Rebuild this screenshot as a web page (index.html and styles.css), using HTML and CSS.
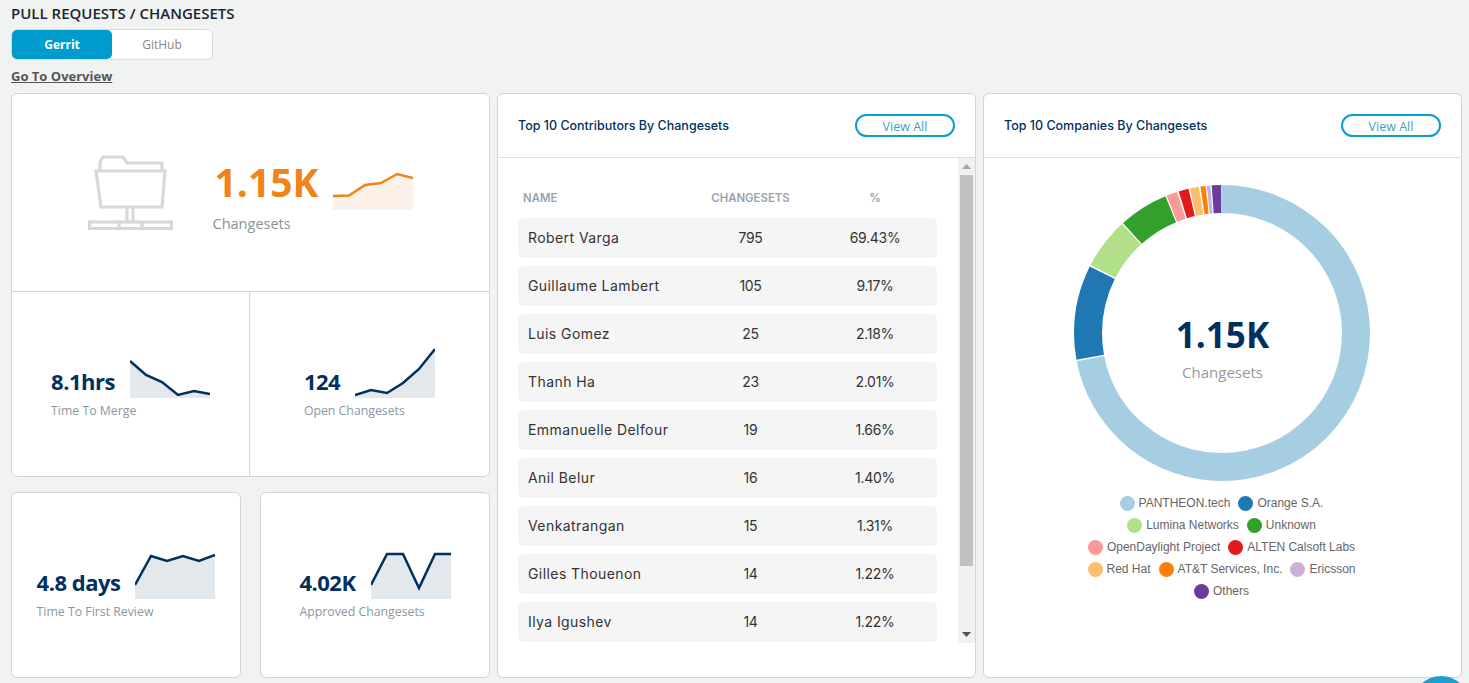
FILE: index.html
```html
<!DOCTYPE html>
<html lang="en">
<head>
<meta charset="utf-8">
<title>Pull Requests / Changesets</title>
<link rel="stylesheet" href="styles.css">
</head>
<body>
<main class="page">
  <h1 class="page-title">PULL REQUESTS / CHANGESETS</h1>
  <div class="tabs">
    <button class="tab tab-active">Gerrit</button>
    <button class="tab">GitHub</button>
  </div>
  <a class="overview-link" href="#">Go To Overview</a>
  <div class="columns">
    <section class="left-col">
      <div class="card summary-card">
        <div class="summary-main">
          <div class="summary-group">
            <svg class="folder-icon" width="85" height="75" viewBox="0 0 85 75" fill="none" stroke="#d8d8d8" stroke-width="3.200">
              <path d="M12 15V7L15 2H35L39 8H74V15"/>
              <path d="M8 16H77L74 52H13Z"/>
              <path d="M39 52V66M45 52V66"/>
              <rect x="1.5" y="67" width="82" height="6.5"/>
              <path d="M31 67V73M54 67V73"/>
            </svg>
            <div class="summary-text">
              <div class="summary-top">
                <span class="summary-value">1.15K</span>
                <svg class="spark spark-low" width="80" height="40" viewBox="0 0 80 40">
                  <path class="area-orange" d="M0 26L16 25.500L32 15L48 13L64 4L80 8V40H0Z"/>
                  <path class="line-orange" d="M0 26L16 25.500L32 15L48 13L64 4L80 8"/>
                </svg>
              </div>
              <div class="summary-label">Changesets</div>
            </div>
          </div>
        </div>
        <div class="summary-split">
          <div class="stat stat-split">
            <div class="stat-inner">
              <div class="stat-top">
                <span class="stat-value">8.1hrs</span>
                <svg class="spark" width="80" height="51" viewBox="0 0 80 51">
                  <path class="area-navy" d="M0 14L16 28L32 35L48 48L64 44L80 47V51H0Z"/>
                  <path class="line-navy" d="M0 14L16 28L32 35L48 48L64 44L80 47"/>
                </svg>
              </div>
              <div class="stat-label">Time To Merge</div>
            </div>
          </div>
          <div class="stat">
            <div class="stat-inner">
              <div class="stat-top">
                <span class="stat-value">124</span>
                <svg class="spark" width="80" height="51" viewBox="0 0 80 51">
                  <path class="area-navy" d="M0 48L16 43L32 46L48 36L64 22L80 2V51H0Z"/>
                  <path class="line-navy" d="M0 48L16 43L32 46L48 36L64 22L80 2"/>
                </svg>
              </div>
              <div class="stat-label">Open Changesets</div>
            </div>
          </div>
        </div>
      </div>
      <div class="mini-row">
        <div class="card stat">
          <div class="stat-inner">
            <div class="stat-top">
              <span class="stat-value">4.8 days</span>
              <svg class="spark" width="80" height="51" viewBox="0 0 80 51">
                <path class="area-navy" d="M0 37L16 8L32 13L48 8L64 13L80 7V51H0Z"/>
                <path class="line-navy" d="M0 37L16 8L32 13L48 8L64 13L80 7"/>
              </svg>
            </div>
            <div class="stat-label">Time To First Review</div>
          </div>
        </div>
        <div class="card stat">
          <div class="stat-inner">
            <div class="stat-top">
              <span class="stat-value">4.02K</span>
              <svg class="spark" width="80" height="51" viewBox="0 0 80 51">
                <path class="area-navy" d="M0 37L16 6L32 6L48 40L64 6L80 6V51H0Z"/>
                <path class="line-navy" d="M0 37L16 6L32 6L48 40L64 6L80 6"/>
              </svg>
            </div>
            <div class="stat-label">Approved Changesets</div>
          </div>
        </div>
      </div>
    </section>

    <section class="card panel">
      <header class="panel-head">
        <h2 class="panel-title">Top 10 Contributors By Changesets</h2>
        <button class="view-all">View All</button>
      </header>
      <div class="table-wrap">
        <div class="table-scroll">
          <div class="table-head">
            <span class="col-name">NAME</span>
            <span class="col-num">CHANGESETS</span>
            <span class="col-pct">%</span>
          </div>
          <div class="row"><span class="col-name">Robert Varga</span><span class="col-num">795</span><span class="col-pct">69.43%</span></div>
          <div class="row"><span class="col-name">Guillaume Lambert</span><span class="col-num">105</span><span class="col-pct">9.17%</span></div>
          <div class="row"><span class="col-name">Luis Gomez</span><span class="col-num">25</span><span class="col-pct">2.18%</span></div>
          <div class="row"><span class="col-name">Thanh Ha</span><span class="col-num">23</span><span class="col-pct">2.01%</span></div>
          <div class="row"><span class="col-name">Emmanuelle Delfour</span><span class="col-num">19</span><span class="col-pct">1.66%</span></div>
          <div class="row"><span class="col-name">Anil Belur</span><span class="col-num">16</span><span class="col-pct">1.40%</span></div>
          <div class="row"><span class="col-name">Venkatrangan</span><span class="col-num">15</span><span class="col-pct">1.31%</span></div>
          <div class="row"><span class="col-name">Gilles Thouenon</span><span class="col-num">14</span><span class="col-pct">1.22%</span></div>
          <div class="row"><span class="col-name">Ilya Igushev</span><span class="col-num">14</span><span class="col-pct">1.22%</span></div>
        </div>
        <div class="scrollbar">
          <svg class="sb-arrow" width="17" height="17" viewBox="0 0 17 17"><path d="M8.500 6L13 11H4Z" fill="#a3a3a3"/></svg>
          <div class="sb-thumb"></div>
          <svg class="sb-arrow sb-arrow-end" width="17" height="17" viewBox="0 0 17 17"><path d="M4 6H13L8.500 11Z" fill="#505050"/></svg>
        </div>
      </div>
    </section>

    <section class="card panel">
      <header class="panel-head">
        <h2 class="panel-title">Top 10 Companies By Changesets</h2>
        <button class="view-all">View All</button>
      </header>
      <div class="chart-body">
        <div class="donut">
          <svg width="296" height="296" viewBox="0 0 296 296" fill="none" stroke-width="28">
            <g transform="rotate(-90 148 148)">
              <circle cx="148" cy="148" r="134" pathLength="360" stroke="#a6cee3" stroke-dasharray="259 101" stroke-dashoffset="0"/>
              <circle cx="148" cy="148" r="134" pathLength="360" stroke="#1f78b4" stroke-dasharray="37.100 322.900" stroke-dashoffset="-259.600"/>
              <circle cx="148" cy="148" r="134" pathLength="360" stroke="#b2df8a" stroke-dasharray="20.100 339.900" stroke-dashoffset="-297.400"/>
              <circle cx="148" cy="148" r="134" pathLength="360" stroke="#33a02c" stroke-dasharray="19.500 340.500" stroke-dashoffset="-318"/>
              <circle cx="148" cy="148" r="134" pathLength="360" stroke="#fb9a99" stroke-dasharray="4.300 355.700" stroke-dashoffset="-338"/>
              <circle cx="148" cy="148" r="134" pathLength="360" stroke="#e31a1c" stroke-dasharray="3.900 356.100" stroke-dashoffset="-343"/>
              <circle cx="148" cy="148" r="134" pathLength="360" stroke="#fdbf6f" stroke-dasharray="3.500 356.500" stroke-dashoffset="-347.500"/>
              <circle cx="148" cy="148" r="134" pathLength="360" stroke="#ff7f00" stroke-dasharray="2 358" stroke-dashoffset="-351.600"/>
              <circle cx="148" cy="148" r="134" pathLength="360" stroke="#cab2d6" stroke-dasharray="1.400 358.600" stroke-dashoffset="-354.100"/>
              <circle cx="148" cy="148" r="134" pathLength="360" stroke="#6a3d9a" stroke-dasharray="3.700 356.300" stroke-dashoffset="-356"/>
            </g>
          </svg>
          <div class="donut-center">
            <div class="donut-value">1.15K</div>
            <div class="donut-label">Changesets</div>
          </div>
        </div>
        <div class="legend">
          <div class="legend-row">
            <span class="legend-item"><i class="dot dot-1"></i>PANTHEON.tech</span>
            <span class="legend-item"><i class="dot dot-2"></i>Orange S.A.</span>
          </div>
          <div class="legend-row">
            <span class="legend-item"><i class="dot dot-3"></i>Lumina Networks</span>
            <span class="legend-item"><i class="dot dot-4"></i>Unknown</span>
          </div>
          <div class="legend-row">
            <span class="legend-item"><i class="dot dot-5"></i>OpenDaylight Project</span>
            <span class="legend-item"><i class="dot dot-6"></i>ALTEN Calsoft Labs</span>
          </div>
          <div class="legend-row">
            <span class="legend-item"><i class="dot dot-7"></i>Red Hat</span>
            <span class="legend-item"><i class="dot dot-8"></i>AT&amp;T Services, Inc.</span>
            <span class="legend-item"><i class="dot dot-9"></i>Ericsson</span>
          </div>
          <div class="legend-row">
            <span class="legend-item"><i class="dot dot-10"></i>Others</span>
          </div>
        </div>
      </div>
    </section>
  </div>
</main>
<div class="chat-bubble"></div>
</body>
</html>
```
FILE: styles.css
```css
* { box-sizing: border-box; }
html, body { margin: 0; height: 683px; overflow: hidden; }
body { background: #f1f3f3; font-family: "Open Sans", sans-serif; color: #333; }
.page { padding: 5px 7px 0 11px; }
.page-title { margin: 0; font-size: 15px; line-height: 17px; font-weight: 600; color: #1c2530; }
.tabs { display: flex; width: 202px; height: 31px; margin-top: 7px; padding: 0; background: #fff; border: 1px solid #dcdcdc; border-radius: 6px; }
.tab { flex: 1; border: 0; background: transparent; border-radius: 5px; font: 400 12px "Open Sans", sans-serif; color: #888; padding: 0; }
.tab-active { background: #009bcd; color: #fff; font-weight: 700; }
.overview-link { display: block; margin-top: 8px; height: 17px; font-size: 13px; line-height: 17px; font-weight: 700; color: #555; text-decoration: underline; }
.columns { display: grid; grid-template-columns: 479px 479px 479px; gap: 7px; margin-top: 8px; height: 585px; }
.card { background: #fff; border: 1px solid #d2d5d5; border-radius: 6px; }
.left-col { display: flex; flex-direction: column; gap: 15px; }
.summary-card { height: 384px; display: flex; flex-direction: column; }
.summary-main { height: 198px; display: flex; align-items: center; justify-content: center; border-bottom: 1px solid #d2d5d5; }
.summary-group { display: flex; align-items: center; gap: 40px; }
.summary-text { margin-top: 6px; }
.summary-top { display: flex; align-items: flex-end; gap: 15px; }
.summary-value { font-size: 39px; line-height: 50px; font-weight: 700; color: #f0841a; margin-left: 2px; }
.summary-label { margin-top: 7px; font-size: 14.500px; line-height: 20px; font-weight: 500; color: #8a9299; }
.summary-split { flex: 1; display: grid; grid-template-columns: 238px 1fr; }
.stat { display: flex; align-items: center; justify-content: center; padding-bottom: 2px; }
.stat-split { border-right: 1px solid #d2d5d5; }
.stat-top { display: flex; align-items: flex-end; gap: 15px; }
.stat-value { font-size: 22px; line-height: 30px; font-weight: 700; color: #00305f; letter-spacing: -.5px; margin-bottom: 2px; }
.stat-label { font-size: 12.300px; line-height: 17px; color: #8a97a3; margin-top: 4px; white-space: nowrap; }
.spark { display: block; flex: none; }
.spark-low { margin-bottom: -3px; }
.area-orange { fill: #fcf1e8; }
.line-orange { fill: none; stroke: #f0841a; stroke-width: 2.5; }
.area-navy { fill: #e3e8ed; }
.line-navy { fill: none; stroke: #00305f; stroke-width: 2.500; }
.mini-row { flex: 1; display: grid; grid-template-columns: 230px 230px; justify-content: space-between; }
.panel { display: flex; flex-direction: column; min-height: 0; }
.panel-head { height: 64px; flex: none; display: flex; align-items: center; justify-content: space-between; padding: 0 20px; border-bottom: 1px solid #dcdfdf; }
.panel-title { margin: 0; font: 500 12.500px "Inter", sans-serif; color: #00305f; }
.view-all { width: 100px; height: 23px; padding: 1px 0 0; border: 2px solid #0a9dcf; border-radius: 12px; background: #fff; font: 400 12.500px "Open Sans", sans-serif; color: #3aa0d0; }
.table-wrap { display: flex; height: 485px; }
.table-scroll { flex: 1; min-width: 0; overflow: hidden; padding: 0 21px 0 20px; }
.scrollbar { flex: none; width: 17px; display: flex; flex-direction: column; background: #f1f1f1; }
.sb-arrow { display: block; flex: none; }
.sb-arrow-end { margin-top: auto; }
.sb-thumb { height: 391px; margin: 0 2px; background: #c1c1c1; }
.table-head, .row { display: grid; width: 419px; align-items: center; }
.table-head { height: 60px; padding: 20px 0 0 5px; grid-template-columns: 165px 125px 124px; font: 600 11.400px "Inter", sans-serif; color: #98a2b3; }
.row { height: 40px; margin-bottom: 8px; padding: 0 0 1px 10px; grid-template-columns: 160px 125px 124px; background: #f5f5f5; border-radius: 5px; font: 400 14px "Inter", sans-serif; color: #333; }
.row .col-name { letter-spacing: .42px; }
.row .col-num, .row .col-pct { letter-spacing: -.3px; }
.col-num, .col-pct { text-align: center; }
.col-name { white-space: nowrap; }
.chart-body { flex: 1; display: flex; flex-direction: column; align-items: center; padding: 27px 2px 0 0; }
.donut { position: relative; width: 296px; height: 296px; }
.donut svg { display: block; }
.donut-center { position: absolute; inset: 0; display: flex; flex-direction: column; align-items: center; justify-content: center; padding: 30px 0 0 2px; }
.donut-value { font-size: 35px; line-height: 44px; font-weight: 700; color: #00305f; }
.donut-label { font-size: 15px; line-height: 24px; color: #999; margin-top: 3px; }
.legend { margin-top: 11px; font: 12px/22px "Liberation Sans", sans-serif; color: #666; display: flex; flex-direction: column; align-items: center; }
.legend-row { display: flex; gap: 8px; height: 22px; }
.legend-item { display: flex; align-items: center; gap: 4px; white-space: nowrap; }
.dot { width: 15px; height: 15px; border-radius: 50%; flex: none; }
.dot-1 { background: #a6cee3; }
.dot-2 { background: #1f78b4; }
.dot-3 { background: #b2df8a; }
.dot-4 { background: #33a02c; }
.dot-5 { background: #fb9a99; }
.dot-6 { background: #e31a1c; }
.dot-7 { background: #fdbf6f; }
.dot-8 { background: #ff7f00; }
.dot-9 { background: #cab2d6; }
.dot-10 { background: #6a3d9a; }
.chat-bubble { position: fixed; left: 1412px; top: 676px; width: 58px; height: 58px; border-radius: 50%; background: #1a9fd0; }
```
